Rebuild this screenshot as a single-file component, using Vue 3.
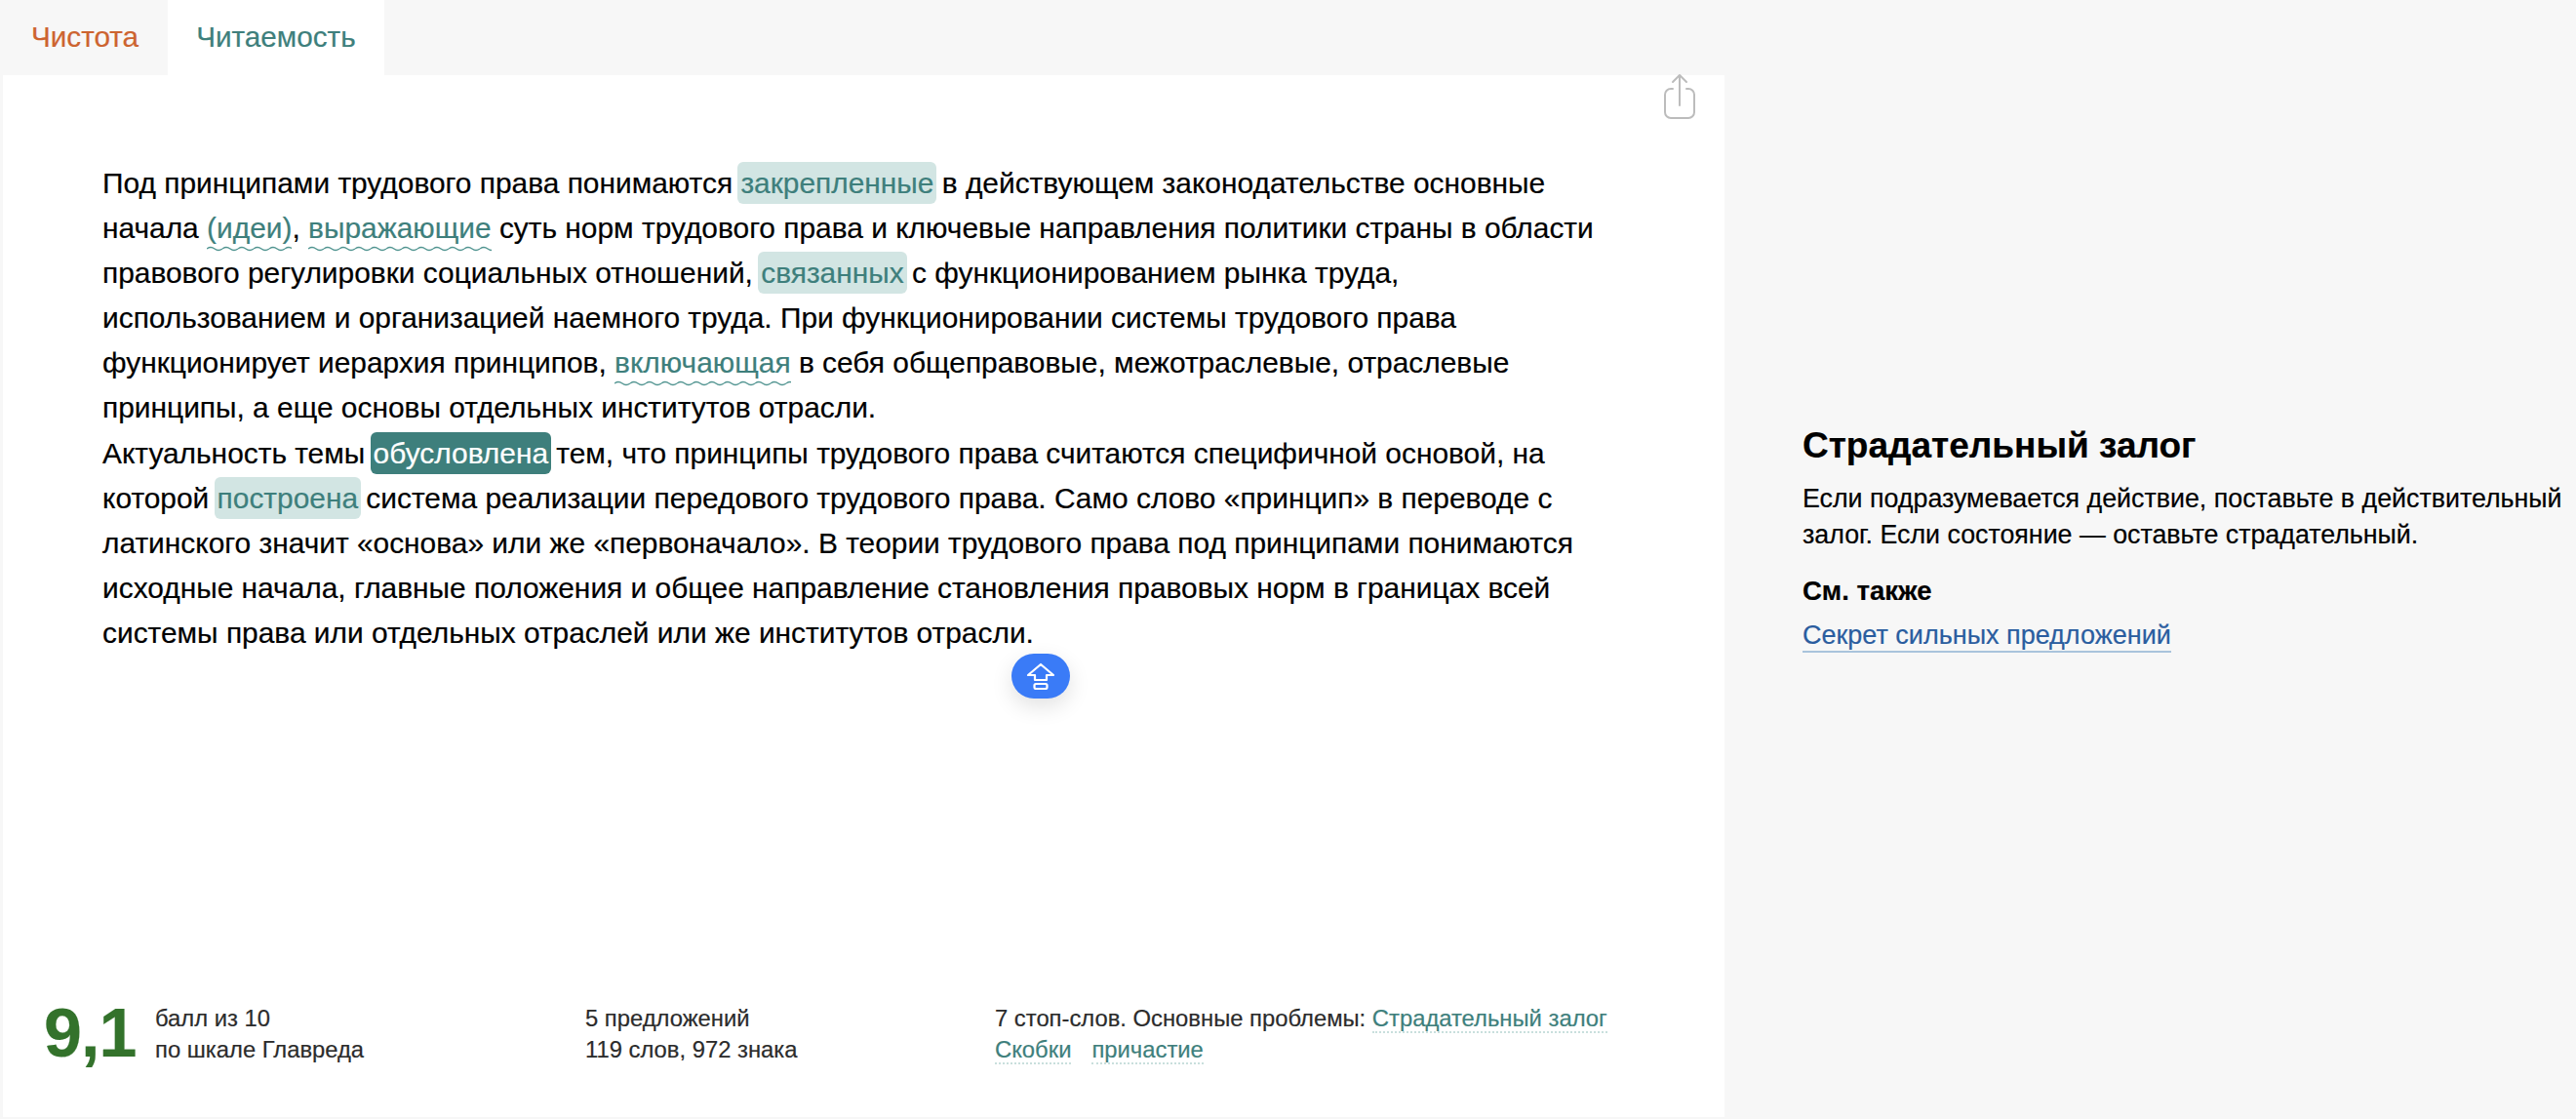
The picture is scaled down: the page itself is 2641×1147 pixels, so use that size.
<script setup>
const tabs = [
  { label: 'Чистота', cls: 'clean' },
  { label: 'Читаемость', cls: 'read' }
]
</script>

<template>
  <div class="page">
    <div class="left">
      <nav class="tabs">
        <div v-for="t in tabs" :key="t.label" class="tab" :class="t.cls">{{ t.label }}</div>
      </nav>
      <main class="main">
        <svg class="share" width="34" height="48" viewBox="0 0 34 48" fill="none" stroke="#bcbcbc" stroke-width="2" stroke-linecap="round" stroke-linejoin="round">
          <path d="M10 16H8a6 6 0 0 0-6 6v18a6 6 0 0 0 6 6h18a6 6 0 0 0 6-6V22a6 6 0 0 0-6-6h-2"/>
          <path d="M17 33V2M10 9l7-7 7 7"/>
        </svg>
        <div class="text">
          Под принципами трудового права понимаются <span class="hl">закрепленные</span> в действующем законодательстве основные начала <span class="wave">(идеи)</span>, <span class="wave">выражающие</span> суть норм трудового права и ключевые направления политики страны в области правового регулировки социальных отношений, <span class="hl">связанных</span> с функционированием рынка труда, использованием и организацией наемного труда. При функционировании системы трудового права функционирует иерархия принципов, <span class="wave">включающая</span> в себя общеправовые, межотраслевые, отраслевые принципы, а еще основы отдельных институтов отрасли.<br>
          Актуальность темы <span class="hl active">обусловлена</span> тем, что принципы трудового права считаются специфичной основой, на которой <span class="hl">построена</span> система реализации передового трудового права. Само слово «принцип» в переводе с латинского значит «основа» или же «первоначало». В теории трудового права под принципами понимаются исходные начала, главные положения и общее направление становления правовых норм в границах всей системы права или отдельных отраслей или же институтов отрасли.
        </div>
        <button class="up">
          <svg width="30" height="28" viewBox="0 0 30 28" fill="none" stroke="#fff" stroke-width="2.2" stroke-linejoin="round">
            <path d="M15 2 2 13h7v5h12v-5h7z"/>
            <rect x="8.5" y="22" width="13" height="5" rx="1.5"/>
          </svg>
        </button>
        <footer class="stats">
          <div class="score">9,1</div>
          <div class="col c1">балл из 10<br>по шкале Главреда</div>
          <div class="col c2">5 предложений<br>119 слов, 972 знака</div>
          <div class="col c3">7 стоп-слов. Основные проблемы: <a class="prob">Страдательный залог</a><br><a class="prob">Скобки</a><a class="prob second">причастие</a></div>
        </footer>
      </main>
    </div>
    <aside class="side">
      <h2>Страдательный залог</h2>
      <p>Если подразумевается действие, поставьте в действительный залог. Если состояние — оставьте страдательный.</p>
      <h3>См. также</h3>
      <a class="more">Секрет сильных предложений</a>
    </aside>
  </div>
</template>

<style>
html, body { margin: 0; background: #f7f7f7; }
</style>

<style scoped>
.page {
  display: flex;
  height: 1147px;
  width: 2641px;
  overflow: hidden;
  background: #f7f7f7;
  color: #000;
  font-family: "Liberation Sans", Arial, sans-serif;
  -webkit-text-stroke: 0.2px currentColor;
}
.left {
  width: 1768px;
  display: flex;
  flex-direction: column;
  flex: none;
}
.tabs {
  display: flex;
  height: 77px;
  flex: none;
}
.tab {
  font-size: 29.7px;
  line-height: 76px;
}
.tab.clean { color: #cd6430; padding: 0 30px 0 32px; }
.tab.read { color: #3e7f7c; background: #fff; padding: 0 29px; }
.main {
  position: relative;
  flex: 1;
  margin: 0 0 2px 3px;
  background: #fff;
  display: flex;
  flex-direction: column;
}
.share {
  position: absolute;
  right: 29px;
  top: -2px;
}
.text {
  margin: 88px 0 0 102px;
  width: 1550px;
  font-size: 29.9px;
  line-height: 46.1px;
}
.hl {
  background: #d2e5e3;
  color: #3e7f7c;
  border-radius: 6px;
  padding: 5px 3px;
  margin: 0 -3px;
}
.hl.active {
  background: #3e7f7c;
  color: #fff;
}
.wave {
  color: #3e7f7c;
  padding-bottom: 8px;
  background: url("data:image/svg+xml,%3Csvg xmlns='http://www.w3.org/2000/svg' width='16' height='6'%3E%3Cpath d='M0 3Q4 0 8 3T16 3' fill='none' stroke='%234f938f' stroke-width='1.4'/%3E%3C/svg%3E") repeat-x 0 100%;
}
.up {
  position: absolute;
  left: 1034px;
  top: 593px;
  width: 60px;
  height: 46px;
  padding: 0;
  border: 0;
  border-radius: 23px;
  background: #3a7bf7;
  box-shadow: 0 8px 22px rgba(0, 0, 0, 0.12);
  display: flex;
  align-items: center;
  justify-content: center;
}
.stats {
  margin-top: auto;
  display: flex;
  align-items: flex-start;
  padding-bottom: 51px;
  font-size: 23.8px;
  line-height: 32px;
  color: #2b2b2b;
}
.score {
  width: 114px;
  margin-left: 42px;
  margin-top: -4px;
  font-size: 70px;
  line-height: 70px;
  font-weight: 700;
  color: #33722b;
  letter-spacing: -1px;
  flex: none;
}
.col { flex: none; }
.c1 { width: 441px; }
.c2 { width: 420px; }
.prob {
  color: #3e7f7c;
  border-bottom: 2px dotted #c9dfdd;
}
.prob.second { margin-left: 21px; }
.side {
  flex: 1;
  padding: 0 0 43.5px 80px;
  display: flex;
  flex-direction: column;
  justify-content: center;
  align-items: flex-start;
}
.side h2 {
  margin: 0;
  font-size: 37px;
  line-height: 44px;
  font-weight: 700;
}
.side p {
  margin: 14px 0 0;
  font-size: 26.8px;
  line-height: 37px;
}
.side h3 {
  margin: 20px 0 0;
  font-size: 27.5px;
  line-height: 37px;
  font-weight: 700;
}
.more {
  margin-top: 11.5px;
  font-size: 27px;
  line-height: 31px;
  color: #2a5d9f;
  border-bottom: 2px solid #a9c4dc;
}
</style>
